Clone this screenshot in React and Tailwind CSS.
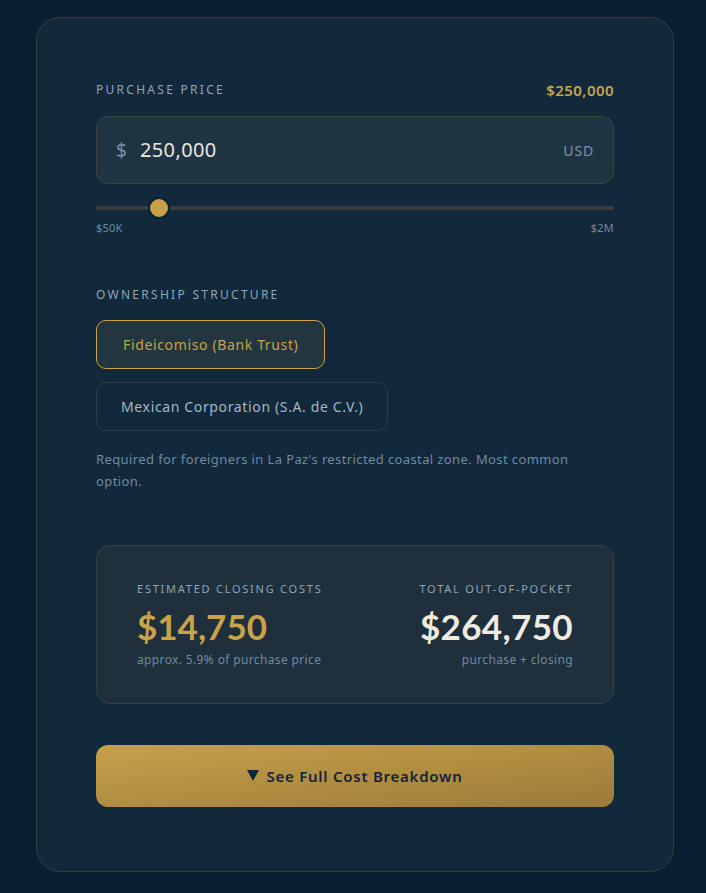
import React, { useState } from "react";

const MIN = 50000;
const MAX = 2000000;

export default function App() {
  const [price] = useState(250000);
  const [structure, setStructure] = useState("fideicomiso");

  const pct = ((price - MIN) / (MAX - MIN)) * 100;
  const closing = Math.round(price * 0.059);
  const total = price + closing;
  const fmt = (n) => n.toLocaleString("en-US");

  return (
    <div className="min-h-[893px] bg-[#0b1f33] pt-[17px] pl-[36px] font-['Noto_Sans',sans-serif]">
      <div className="w-[638px] rounded-[24px] border border-[#343f3a] bg-[#12283b] px-[59px] pt-[64px] pb-[64px]">
        {/* Purchase price */}
        <div className="flex items-center justify-between mb-[18px]">
          <p className="text-[12px] leading-4 tracking-[0.19em] text-[#8ea5b7]">PURCHASE PRICE</p>
          <p className="text-[15px] leading-4 font-semibold tracking-[0.03em] text-[#c9a24a]">${fmt(price)}</p>
        </div>

        <div className="flex h-[68px] items-center rounded-[12px] border border-[#3a4540] bg-[#1e3443] px-[19px]">
          <span className="text-[19px] text-[#7a91a2] mr-[13px]">$</span>
          <span className="flex-1 text-[20px] tracking-[0.02em] text-[#ebe6dc]">{fmt(price)}</span>
          <span className="text-[14px] tracking-[0.06em] text-[#7f95a5]">USD</span>
        </div>

        {/* Slider */}
        <div className="relative mt-[14px] h-[20px]">
          <div className="absolute left-0 right-0 top-[8px] h-[4px] rounded-full bg-[#373e3b]" />
          <div
            className="absolute top-0 h-[22px] w-[22px] -translate-x-1/2 -translate-y-[1px] rounded-full border-2 border-[#0e2133] bg-[#c7a04a]"
            style={{ left: `calc(${pct}% + 10px)` }}
          />
        </div>
        <div className="mt-[3px] flex justify-between text-[11px] leading-[14px] tracking-[0.02em] text-[#6f8aa0]">
          <span>$50K</span>
          <span>$2M</span>
        </div>

        {/* Ownership structure */}
        <p className="mt-[52px] mb-[17px] text-[12px] leading-4 tracking-[0.19em] text-[#8ea5b7]">
          OWNERSHIP STRUCTURE
        </p>
        <div className="flex flex-col items-start gap-[13px] tracking-[0.04em]">
          <button
            onClick={() => setStructure("fideicomiso")}
            className={`h-[49px] rounded-[10px] border px-[26px] text-[14px] ${
              structure === "fideicomiso"
                ? "border-[#c9a24a] bg-[#23353e] text-[#c9a24a]"
                : "border-[#303e40] text-[#a6b6c3]"
            }`}
          >
            Fideicomiso (Bank Trust)
          </button>
          <button
            onClick={() => setStructure("corp")}
            className={`h-[49px] rounded-[10px] border px-[24px] text-[14px] ${
              structure === "corp"
                ? "border-[#c9a24a] bg-[#23353e] text-[#c9a24a]"
                : "border-[#303e40] text-[#a6b6c3]"
            }`}
          >
            Mexican Corporation (S.A. de C.V.)
          </button>
        </div>
        <p className="mt-[17px] max-w-[490px] text-[13px] leading-[22px] tracking-[0.03em] text-[#6f8aa0]">
          Required for foreigners in La Paz's restricted coastal zone. Most common option.
        </p>

        {/* Summary */}
        <div className="mt-[53px] flex justify-between rounded-[14px] border border-[#364140] bg-[#1f303c] px-[40px] pt-[36px] pb-[34px]">
          <div>
            <p className="text-[11px] leading-[14px] tracking-[0.16em] text-[#8ea5b7]">ESTIMATED CLOSING COSTS</p>
            <p className="mt-[10px] font-['Lato',sans-serif] text-[35px] leading-[40px] font-bold text-[#c9a24a]">
              ${fmt(closing)}
            </p>
            <p className="mt-[5px] text-[12px] leading-[18px] tracking-[0.03em] text-[#6f8aa0]">approx. 5.9% of purchase price</p>
          </div>
          <div className="text-right">
            <p className="text-[11px] leading-[14px] tracking-[0.16em] text-[#8ea5b7]">TOTAL OUT-OF-POCKET</p>
            <p className="mt-[10px] font-['Lato',sans-serif] text-[35px] leading-[40px] font-bold tracking-[0.01em] text-[#f0ebe1]">
              ${fmt(total)}
            </p>
            <p className="mt-[5px] text-[12px] leading-[18px] tracking-[0.03em] text-[#6f8aa0]">purchase + closing</p>
          </div>
        </div>

        {/* CTA */}
        <button className="mt-[41px] flex h-[62px] w-full items-center justify-center gap-[7px] rounded-[12px] bg-gradient-to-br from-[#c6a04b] to-[#9c7b39] text-[15px] font-semibold tracking-[0.05em] text-[#132538]">
          <svg width="12" height="12" viewBox="0 0 12 12">
            <polygon points="0,0 12,0 6,11" fill="#132538" />
          </svg>
          See Full Cost Breakdown
        </button>
      </div>
    </div>
  );
}
